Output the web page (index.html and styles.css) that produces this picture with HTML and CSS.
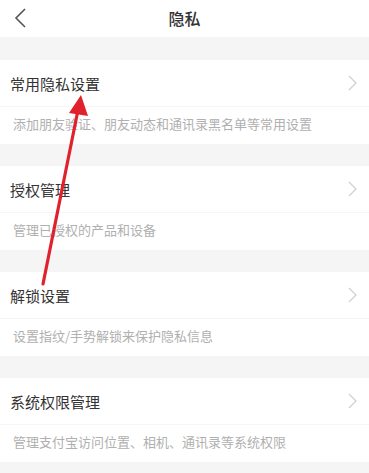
FILE: index.html
```html
<!DOCTYPE html>
<html lang="zh">
<head>
  <meta charset="UTF-8">
  <meta name="viewport" content="width=device-width, initial-scale=1.0">
  <title>隐私</title>
  <link rel="stylesheet" href="styles.css">
</head>
<body>
  <div class="page">
    <div class="nav_bar">
      <svg class="nav_back" width="14" height="22" viewBox="0 0 14 22">
        <path d="M11 2 L2 11 L11 20" fill="none" stroke="#555" stroke-width="1.6"/>
      </svg>
      <h1 class="nav_title">隐私</h1>
    </div>

    <div class="setting_group">
      <div class="setting_head">
        <span class="setting_name">常用隐私设置</span>
        <svg class="setting_arrow" width="9" height="16" viewBox="0 0 9 16">
          <path d="M1 1 L8 8 L1 15" fill="none" stroke="#cfcfcf" stroke-width="1.2"/>
        </svg>
      </div>
      <div class="setting_desc">添加朋友验证、朋友动态和通讯录黑名单等常用设置</div>
    </div>

    <div class="setting_group">
      <div class="setting_head">
        <span class="setting_name">授权管理</span>
        <svg class="setting_arrow" width="9" height="16" viewBox="0 0 9 16">
          <path d="M1 1 L8 8 L1 15" fill="none" stroke="#cfcfcf" stroke-width="1.2"/>
        </svg>
      </div>
      <div class="setting_desc">管理已授权的产品和设备</div>
    </div>

    <div class="setting_group">
      <div class="setting_head">
        <span class="setting_name">解锁设置</span>
        <svg class="setting_arrow" width="9" height="16" viewBox="0 0 9 16">
          <path d="M1 1 L8 8 L1 15" fill="none" stroke="#cfcfcf" stroke-width="1.2"/>
        </svg>
      </div>
      <div class="setting_desc">设置指纹/手势解锁来保护隐私信息</div>
    </div>

    <div class="setting_group">
      <div class="setting_head">
        <span class="setting_name">系统权限管理</span>
        <svg class="setting_arrow" width="9" height="16" viewBox="0 0 9 16">
          <path d="M1 1 L8 8 L1 15" fill="none" stroke="#cfcfcf" stroke-width="1.2"/>
        </svg>
      </div>
      <div class="setting_desc">管理支付宝访问位置、相机、通讯录等系统权限</div>
    </div>

    <!-- annotation arrow drawn over the list -->
    <svg class="mark_arrow" width="369" height="473" viewBox="0 0 369 473">
      <line x1="43" y1="284" x2="78" y2="110" stroke="#e0222c" stroke-width="3.2" stroke-linecap="round"/>
      <polygon points="81,95 69,113 88,116" fill="#e0222c"/>
    </svg>
  </div>
</body>
</html>
```

FILE: styles.css
```css
* {
  box-sizing: border-box;
}

body {
  margin: 0;
  font-family: "Noto Sans CJK SC", "Noto Sans", sans-serif;
  background-color: #f5f5f5;
  color: #333;
}

.page {
  position: relative;
  width: 369px;
  height: 473px;
  overflow: hidden;
  background-color: #f5f5f5;
}

.nav_bar {
  position: relative;
  height: 37px;
  background-color: #fff;
  display: flex;
  align-items: center;
  justify-content: center;
  margin-bottom: 23px;
}

.nav_back {
  position: absolute;
  left: 14px;
  top: 7px;
}

.nav_title {
  margin: 0;
  font-size: 16px;
  font-weight: 500;
  color: #333;
  line-height: 1;
  padding-bottom: 1px;
}

.setting_group {
  background-color: #fff;
  margin-bottom: 22px;
}

.setting_head {
  height: 47px;
  display: flex;
  align-items: center;
  justify-content: space-between;
  padding: 0 12px 0 10px;
  border-bottom: 1px solid #f6f6f6;
}

.setting_name {
  font-size: 15px;
  color: #333;
}

.setting_desc {
  height: 37px;
  display: flex;
  align-items: center;
  padding-left: 13px;
  padding-bottom: 4px;
  font-size: 13px;
  color: #b0b0b0;
}

.mark_arrow {
  position: absolute;
  left: 0;
  top: 0;
  pointer-events: none;
}
```
